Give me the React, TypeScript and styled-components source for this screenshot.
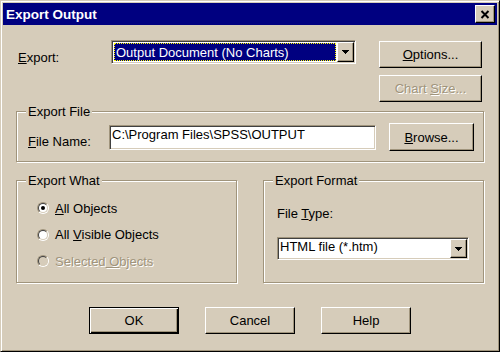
import React from "react";
import styled, { createGlobalStyle, css } from "styled-components";

const FACE = "#D6CCBA";
const SHADOW = "#A0947C";
const LIGHT = "#FFFFFF";
const DARK = "#000000";
const DARK2 = "#404040";
const NAVY = "#000080";

const GlobalStyle = createGlobalStyle`
  html, body { margin: 0; padding: 0; background: ${FACE}; }
  body {
    font-family: "Liberation Sans", Arial, sans-serif;
    font-size: 13px;
    color: #000;
  }
  * { box-sizing: border-box; }
`;

const Window = styled.div`
  width: 500px;
  height: 352px;
  background: ${FACE};
  border: 1px solid;
  border-color: ${FACE} ${DARK} ${DARK} ${FACE};
  box-shadow: inset 1px 1px ${LIGHT}, inset -1px -1px ${SHADOW};
  padding: 2px;
  display: flex;
  flex-direction: column;
`;

const TitleBar = styled.div`
  height: 22px;
  flex: none;
  background: ${NAVY};
  color: #fff;
  display: flex;
  align-items: center;
  justify-content: space-between;
  padding: 0 2px 0 3px;
  font-weight: bold;
  font-size: 13.5px;
`;

const raised = css`
  background: ${FACE};
  border: 1px solid;
  border-color: ${LIGHT} ${DARK} ${DARK} ${LIGHT};
  box-shadow: inset -1px -1px ${SHADOW};
`;

const CloseButton = styled.div`
  ${raised};
  width: 20px;
  height: 18px;
  display: flex;
  align-items: center;
  justify-content: center;
`;

const Body = styled.div`
  padding: 15px 13px 0 13px;
  display: flex;
  flex-direction: column;
`;

const TopRow = styled.div`
  display: flex;
  align-items: flex-start;
  height: 62px;
`;

const Label = styled.div<{ $w?: number; $top?: number; $left?: number }>`
  flex: none;
  width: ${(p) => (p.$w ? `${p.$w}px` : "auto")};
  margin-top: ${(p) => p.$top ?? 0}px;
  margin-left: ${(p) => p.$left ?? 0}px;
  line-height: 15px;
  white-space: nowrap;
`;

const Key = styled.span`
  text-decoration: underline;
  text-underline-offset: 1px;
`;

const sunken = css`
  background: ${LIGHT};
  border: 1px solid;
  border-color: ${SHADOW} ${LIGHT} ${LIGHT} ${SHADOW};
  box-shadow: inset 1px 1px ${DARK2}, inset -1px -1px ${FACE};
  padding: 1px;
`;

const Combo = styled.div<{ $w: number; $h: number; $top?: number }>`
  ${sunken};
  flex: none;
  width: ${(p) => p.$w}px;
  height: ${(p) => p.$h}px;
  margin-top: ${(p) => p.$top ?? 0}px;
  display: flex;
  align-items: stretch;
`;

const ComboValue = styled.div<{ $selected?: boolean }>`
  flex: 1;
  min-width: 0;
  display: flex;
  align-items: ${(p) => (p.$selected ? "center" : "flex-start")};
  padding-left: ${(p) => (p.$selected ? 2 : 1)}px;
  line-height: 15px;
  white-space: nowrap;
  overflow: hidden;
  ${(p) =>
    p.$selected &&
    css`
      margin: 1px;
      background: ${NAVY};
      color: #fff;
      outline: 1px dotted #ffff00;
      outline-offset: -1px;
    `}
`;

const DropButton = styled.div`
  ${raised};
  flex: none;
  width: 17px;
  display: flex;
  align-items: center;
  justify-content: center;
`;

const ButtonStack = styled.div`
  margin-left: 23px;
  margin-top: 1px;
  display: flex;
  flex-direction: column;
  gap: 7px;
`;

const Button = styled.button<{ $w: number; $h?: number; $default?: boolean; $left?: number }>`
  ${raised};
  flex: none;
  width: ${(p) => p.$w}px;
  height: ${(p) => p.$h ?? 27}px;
  margin: 0 0 0 ${(p) => p.$left ?? 0}px;
  padding: 0;
  font: inherit;
  color: #000;
  line-height: 15px;
  display: flex;
  align-items: center;
  justify-content: center;
  white-space: pre;
  ${(p) =>
    p.$default &&
    css`
      border-color: ${DARK};
      box-shadow: inset 1px 1px ${LIGHT}, inset -1px -1px ${DARK}, inset -2px -2px ${SHADOW};
    `}
  &:disabled {
    color: ${SHADOW};
    text-shadow: 1px 1px 0 ${LIGHT};
  }
`;

const Group = styled.fieldset<{ $h: number; $top?: number }>`
  margin: ${(p) => p.$top ?? 0}px 0 0 0;
  padding: 0;
  min-width: 0;
  height: ${(p) => p.$h}px;
  border: 1px solid ${SHADOW};
  box-shadow: inset 1px 1px ${LIGHT}, 1px 1px ${LIGHT};
`;

const Legend = styled.legend`
  margin-left: 9px;
  padding: 0 2px;
  line-height: 15px;
  background: ${FACE};
`;

const FileRow = styled.div`
  display: flex;
  align-items: flex-start;
  padding: 4px 0 0 11px;
`;

const EditField = styled.div`
  ${sunken};
  flex: none;
  width: 267px;
  height: 25px;
  margin-top: 2px;
  padding-left: 2px;
  line-height: 15px;
  white-space: nowrap;
`;

const GroupsRow = styled.div`
  display: grid;
  grid-template-columns: 221px 221px;
  column-gap: 26px;
  margin-top: 11px;
`;

const RadioList = styled.div`
  display: flex;
  flex-direction: column;
  gap: 11.5px;
  padding: 12.5px 0 0 20px;
`;

const RadioRow = styled.div<{ $disabled?: boolean }>`
  display: flex;
  align-items: center;
  gap: 6px;
  line-height: 15px;
  color: ${(p) => (p.$disabled ? SHADOW : "#000")};
  text-shadow: ${(p) => (p.$disabled ? `1px 1px 0 ${LIGHT}` : "none")};
`;

const RadioOuter = styled.span`
  flex: none;
  width: 12px;
  height: 12px;
  border-radius: 50%;
  border: 1px solid;
  border-color: ${SHADOW} ${LIGHT} ${LIGHT} ${SHADOW};
`;

const RadioInner = styled.span<{ $disabled?: boolean }>`
  display: flex;
  align-items: center;
  justify-content: center;
  width: 100%;
  height: 100%;
  border-radius: 50%;
  border: 1px solid;
  border-color: ${DARK2} ${FACE} ${FACE} ${DARK2};
  background: ${(p) => (p.$disabled ? FACE : LIGHT)};
`;

const RadioDot = styled.span`
  width: 4px;
  height: 4px;
  border-radius: 50%;
  background: #000;
`;

const FormatBody = styled.div`
  display: flex;
  flex-direction: column;
  align-items: flex-start;
  padding-left: 13px;
`;

const FooterRow = styled.div`
  display: flex;
  justify-content: center;
  gap: 26px;
  margin-top: 24px;
`;

const Arrow = () => (
  <svg width="7" height="4" viewBox="0 0 7 4" shapeRendering="crispEdges">
    <polygon points="0,0 7,0 3.5,4" fill="#000" />
  </svg>
);

const CloseIcon = () => (
  <svg width="10" height="9" viewBox="0 0 10 9">
    <path d="M1.5 1 L8.5 8 M8.5 1 L1.5 8" stroke="#000" strokeWidth="2" fill="none" />
  </svg>
);

const Radio: React.FC<{ checked?: boolean; disabled?: boolean; children: React.ReactNode }> = ({
  checked,
  disabled,
  children,
}) => (
  <RadioRow $disabled={disabled}>
    <RadioOuter>
      <RadioInner $disabled={disabled}>{checked && <RadioDot />}</RadioInner>
    </RadioOuter>
    <span>{children}</span>
  </RadioRow>
);

export default function App() {
  return (
    <>
      <GlobalStyle />
      <Window>
        <TitleBar>
          <span>Export Output</span>
          <CloseButton>
            <CloseIcon />
          </CloseButton>
        </TitleBar>
        <Body>
          <TopRow>
            <Label $w={93} $left={2} $top={10}>
              <Key>E</Key>xport:
            </Label>
            <Combo $w={245} $h={24}>
              <ComboValue $selected>Output Document (No Charts)</ComboValue>
              <DropButton>
                <Arrow />
              </DropButton>
            </Combo>
            <ButtonStack>
              <Button $w={103}>
                <span>
                  <Key>O</Key>ptions...
                </span>
              </Button>
              <Button $w={103} disabled>
                <span>
                  Chart <Key>S</Key>ize...
                </span>
              </Button>
            </ButtonStack>
          </TopRow>

          <Group $h={58} $top={2}>
            <Legend>Export File</Legend>
            <FileRow>
              <Label $w={81} $top={11}>
                <Key>F</Key>ile Name:
              </Label>
              <EditField>C:\Program Files\SPSS\OUTPUT</EditField>
              <Button $w={85} $h={28} $left={13}>
                <span>
                  <Key>B</Key>rowse...
                </span>
              </Button>
            </FileRow>
          </Group>

          <GroupsRow>
            <Group $h={110}>
              <Legend>Export What</Legend>
              <RadioList>
                <Radio checked>
                  <Key>A</Key>ll Objects
                </Radio>
                <Radio>
                  All <Key>V</Key>isible Objects
                </Radio>
                <Radio disabled>
                  Selected<Key> O</Key>bjects
                </Radio>
              </RadioList>
            </Group>
            <Group $h={110}>
              <Legend>Export Format</Legend>
              <FormatBody>
                <Label $top={18}>
                  File <Key>T</Key>ype:
                </Label>
                <Combo $w={192} $h={23} $top={16}>
                  <ComboValue>HTML file (*.htm)</ComboValue>
                  <DropButton>
                    <Arrow />
                  </DropButton>
                </Combo>
              </FormatBody>
            </Group>
          </GroupsRow>

          <FooterRow>
            <Button $w={90} $default>
              OK
            </Button>
            <Button $w={90}>Cancel</Button>
            <Button $w={90}>Help</Button>
          </FooterRow>
        </Body>
      </Window>
    </>
  );
}
